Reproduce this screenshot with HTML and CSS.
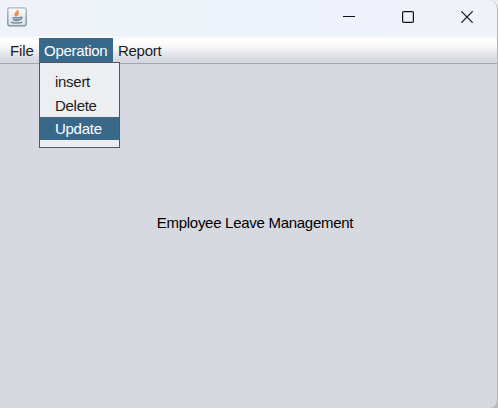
FILE: index.html
```html
<!DOCTYPE html>
<html lang="en">
<head>
<meta charset="utf-8">
<title>Employee Leave Management</title>
<link rel="stylesheet" href="styles.css">
</head>
<body>
<div class="window">
  <header class="titlebar">
    <svg class="app-icon" width="20" height="20" viewBox="0 0 20 20">
      <defs>
        <linearGradient id="tile" x1="0" y1="0" x2="0" y2="1">
          <stop offset="0" stop-color="#fafafa"/><stop offset="1" stop-color="#dcdfe2"/>
        </linearGradient>
        <linearGradient id="rim" x1="0" y1="0" x2="0" y2="1">
          <stop offset="0" stop-color="#a9b8c2"/><stop offset="1" stop-color="#6f8798"/>
        </linearGradient>
      </defs>
      <rect x=".8" y=".8" width="18.4" height="18" rx="1.8" fill="url(#tile)" stroke="url(#rim)" stroke-width="1.3"/>
      <path d="M10.800 3c.6 2-3 2.800-2.600 4.600.2.900 1 1.200 1.200 2M11.800 5.800c-1.800.9-1.900 1.700-1 3" fill="none" stroke="#ee9048" stroke-width="1.900"/>
      <path d="M5.500 9.900h7.500c0 1.800-.4 3.400-1.400 4.300H7c-1-.9-1.500-2.500-1.500-4.300z" fill="#7393ab"/>
      <path d="M6.500 11.700h5.500" stroke="#c5d2db" stroke-width=".7"/>
      <path d="M13 10.200c2.600-.7 2.500 2-.6 2.600M4 15.200c2.500 1.300 8.500 1.300 11-.1" fill="none" stroke="#6486a0" stroke-width="1.400"/>
    </svg>
    <div class="controls">
      <svg width="12" height="12" viewBox="0 0 12 12"><path d="M0 5.500h12" class="line"/></svg>
      <svg width="12" height="12" viewBox="0 0 12 12"><rect x=".6" y=".6" width="10.800" height="10.800" rx="1.200" class="line"/></svg>
      <svg width="12" height="12" viewBox="0 0 12 12"><path d="M.3.3l11.400 11.400M11.700.3L.3 11.700" class="line"/></svg>
    </div>
  </header>
  <nav class="menubar">
    <div class="menu file">File</div>
    <div class="menu open">Operation
      <ul class="popup">
        <li>insert</li>
        <li>Delete</li>
        <li class="selected">Update</li>
      </ul>
    </div>
    <div class="menu">Report</div>
  </nav>
  <main class="content"><p>Employee Leave Management</p></main>
</div>
</body>
</html>
```
FILE: styles.css
```css
* { box-sizing: border-box; }
body {
  margin: 0;
  width: 498px;
  height: 408px;
  overflow: hidden;
  background: linear-gradient(#f0f0f0 50%, #b8babd 50%);
  font: 15px/24px "Liberation Sans", Arial, sans-serif;
  letter-spacing: -.28px;
  color: #1c1c1c;
}
.window {
  display: flex;
  flex-direction: column;
  width: 498px;
  height: 408px;
  border-right: 1px solid #b4b4b6;
  border-radius: 2px 9px 8px 0;
  overflow: hidden;
  background: #d6d9e0;
}
.titlebar {
  display: flex;
  justify-content: space-between;
  height: 36px;
  padding: 7px 24px 0 7px;
  background: linear-gradient(90deg, #eff3f9, #eef2fb 60%, #f0f2f9);
}
.app-icon { display: block; }
.controls { display: flex; gap: 47px; padding-top: 4px; }
.controls svg { display: block; }
.line { fill: none; stroke: #111; stroke-width: 1.2; }
.menubar {
  display: flex;
  height: 28px;
  padding: 2px 0 0 5px;
  border-bottom: 1px solid #a4a7b0;
  background: linear-gradient(#f6f7f9, #fff 20%, #f8f8f9 38%, #d6d9e0 88%);
}
.menu {
  position: relative;
  height: 25px;
  padding: 1px 5px 0;
  white-space: nowrap;
}
.file { width: 34px; letter-spacing: -.1px; }
.open {
  width: 74px;
  background: #39698a;
  color: #fff;
}
.popup {
  position: absolute;
  z-index: 1;
  left: 0;
  top: 24px;
  width: 81px;
  height: 86px;
  margin: 0;
  padding: 7px 0 0;
  list-style: none;
  border: 1px solid #55565b;
  background: #edeef2;
  color: #1c1c1c;
}
.popup li { height: 24px; padding-left: 15px; line-height: 24px; }
.popup .selected { height: 23px; margin-top: -1px; background: #39698a; color: #fff; }
.content {
  flex: 1;
  display: flex;
  justify-content: center;
  padding: 147px 0 0 13px;
  color: #000;
}
.content p { margin: 0; }
```
